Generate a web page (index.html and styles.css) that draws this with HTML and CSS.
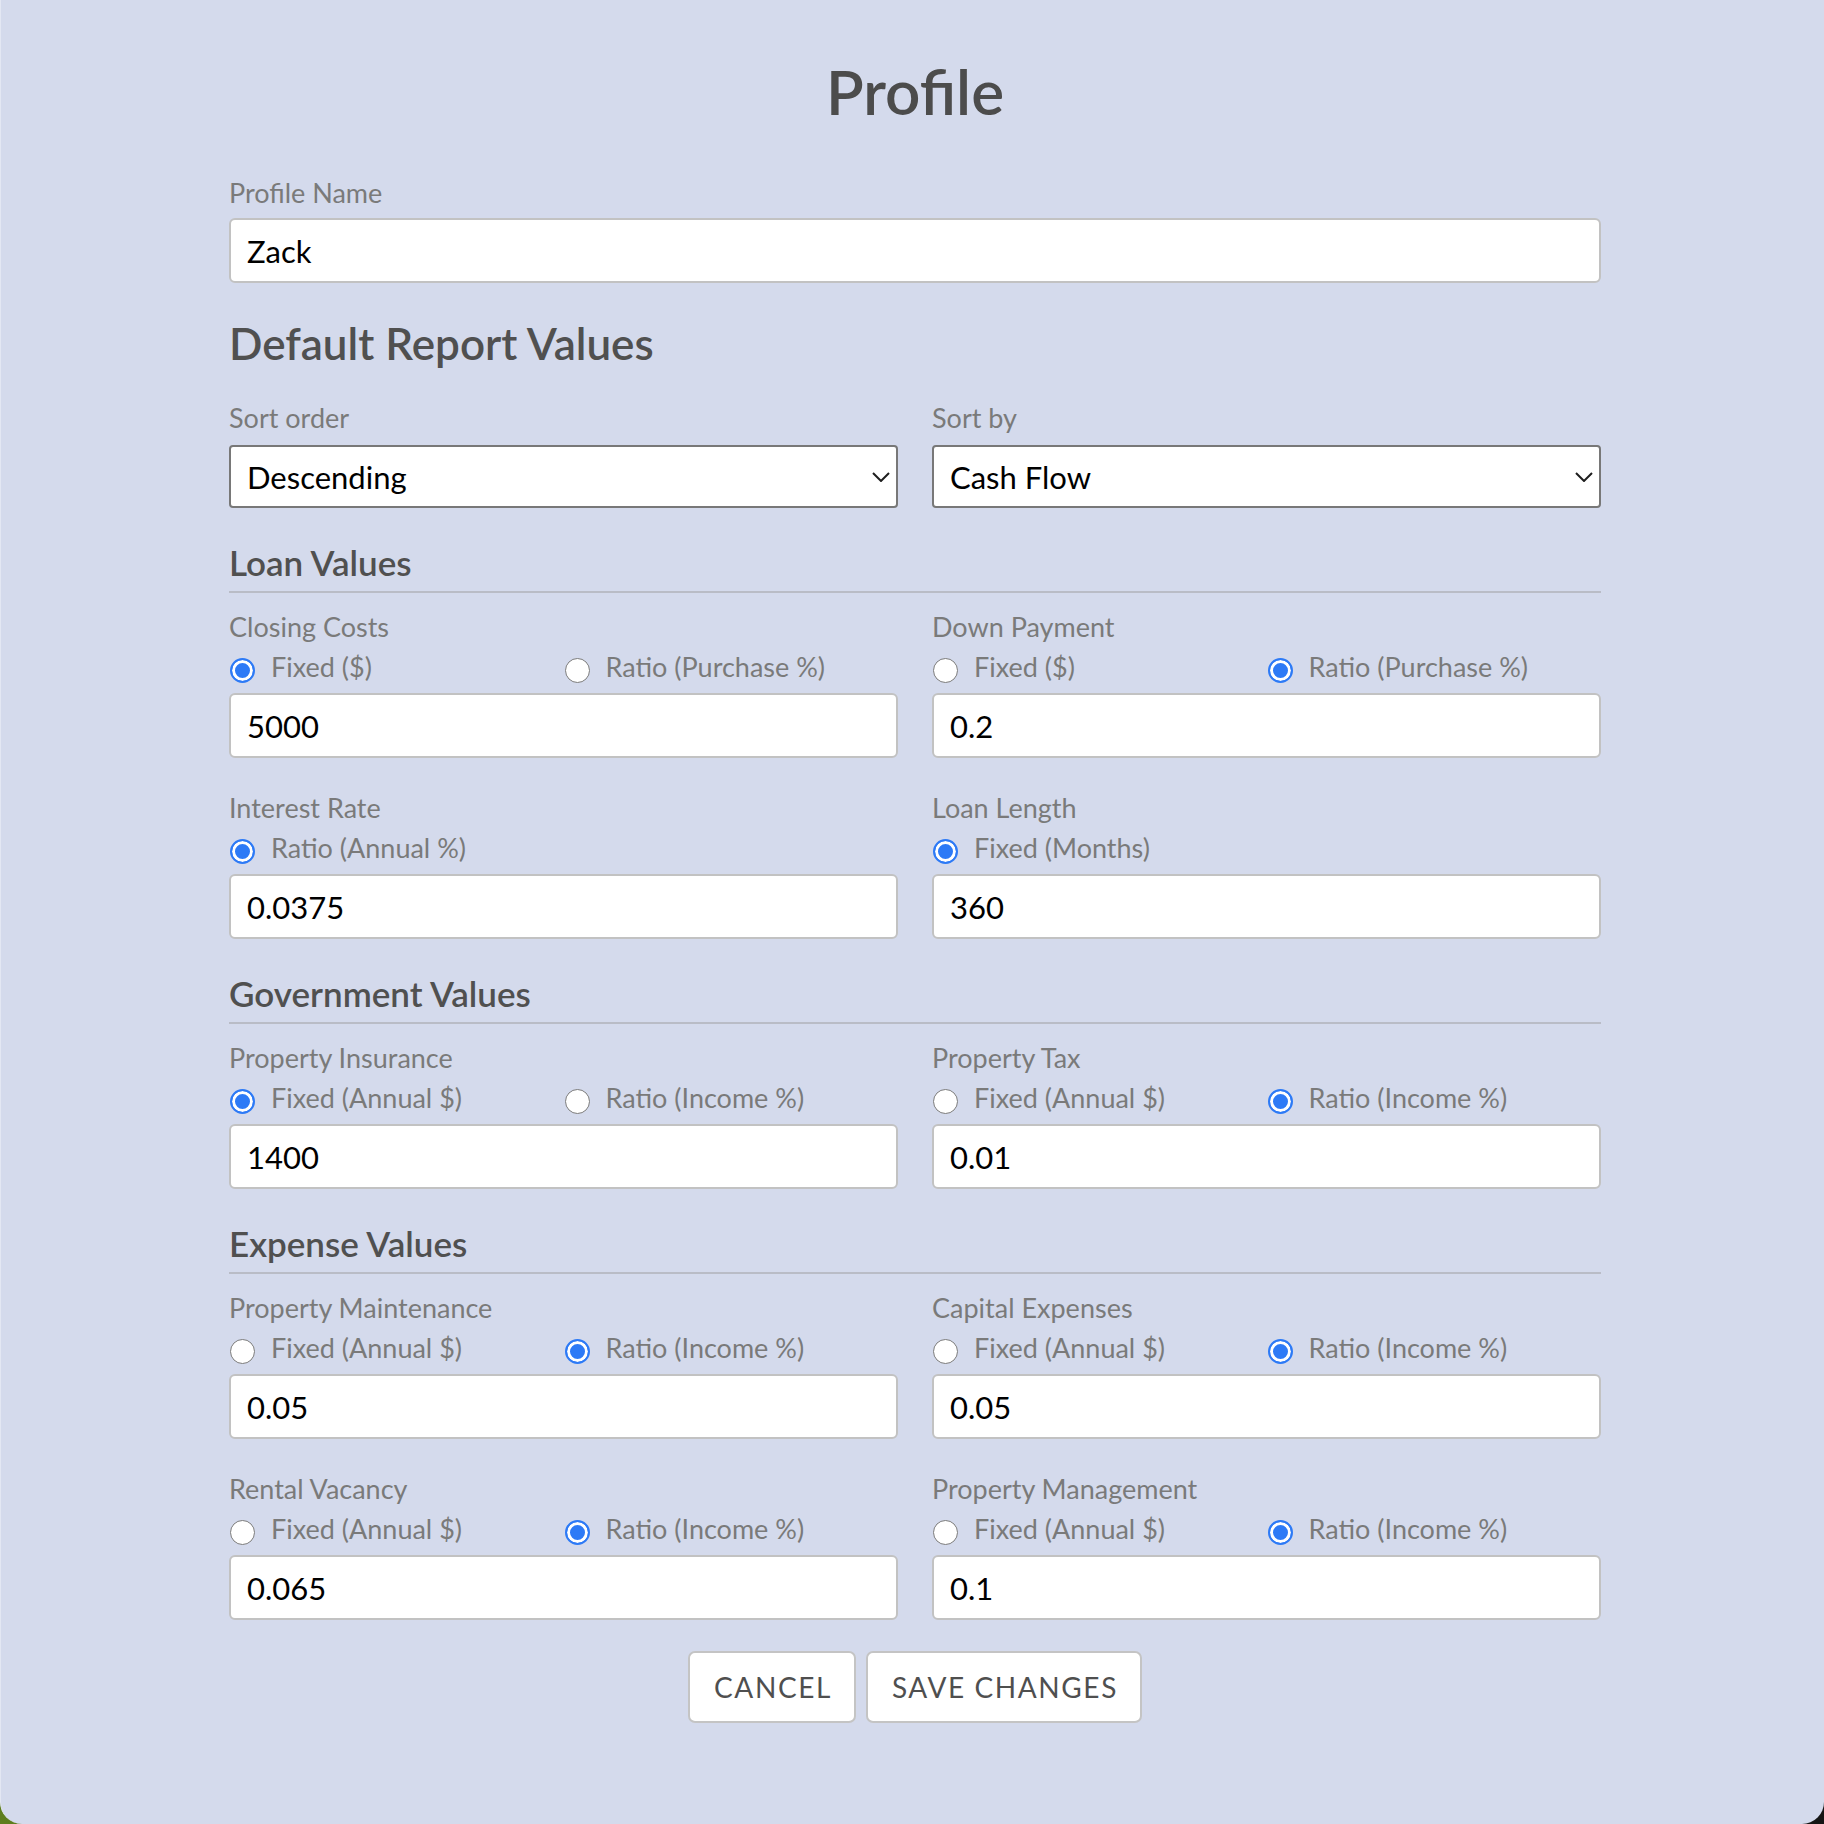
FILE: index.html
```html
<!DOCTYPE html>
<html lang="en">
<head>
<meta charset="utf-8">
<title>Profile</title>
<link rel="stylesheet" href="styles.css">
</head>
<body>
<div class="window">
  <form class="profile">
    <h1 class="title">Profile</h1>

    <div class="field field-name">
      <label class="label" for="pname">Profile Name</label>
      <input class="text-input" id="pname" type="text" value="Zack">
    </div>

    <h2 class="report-title">Default Report Values</h2>

    <div class="grid sort-grid">
      <div class="field">
        <span class="label">Sort order</span>
        <div class="select" role="combobox">
          <span class="select-value">Descending</span>
          <svg class="chevron" width="18" height="10" viewBox="0 0 18 10"><path d="M1 1 L9 9 L17 1" fill="none" stroke="#1e1e1e" stroke-width="2"/></svg>
        </div>
      </div>
      <div class="field">
        <span class="label">Sort by</span>
        <div class="select" role="combobox">
          <span class="select-value">Cash Flow</span>
          <svg class="chevron" width="18" height="10" viewBox="0 0 18 10"><path d="M1 1 L9 9 L17 1" fill="none" stroke="#1e1e1e" stroke-width="2"/></svg>
        </div>
      </div>
    </div>

    <section class="group">
      <h3 class="group-title">Loan Values</h3>
      <div class="grid">
        <div class="field">
          <span class="label">Closing Costs</span>
          <div class="radios">
            <label class="option"><input class="radio" type="radio" name="cc" checked><span>Fixed ($)</span></label>
            <label class="option"><input class="radio" type="radio" name="cc"><span>Ratio (Purchase %)</span></label>
          </div>
          <input class="text-input" type="text" value="5000">
        </div>
        <div class="field">
          <span class="label">Down Payment</span>
          <div class="radios">
            <label class="option"><input class="radio" type="radio" name="dp"><span>Fixed ($)</span></label>
            <label class="option"><input class="radio" type="radio" name="dp" checked><span>Ratio (Purchase %)</span></label>
          </div>
          <input class="text-input" type="text" value="0.2">
        </div>
        <div class="field">
          <span class="label">Interest Rate</span>
          <div class="radios">
            <label class="option"><input class="radio" type="radio" name="ir" checked><span>Ratio (Annual %)</span></label>
          </div>
          <input class="text-input" type="text" value="0.0375">
        </div>
        <div class="field">
          <span class="label">Loan Length</span>
          <div class="radios">
            <label class="option"><input class="radio" type="radio" name="ll" checked><span>Fixed (Months)</span></label>
          </div>
          <input class="text-input" type="text" value="360">
        </div>
      </div>
    </section>

    <section class="group">
      <h3 class="group-title">Government Values</h3>
      <div class="grid">
        <div class="field">
          <span class="label">Property Insurance</span>
          <div class="radios">
            <label class="option"><input class="radio" type="radio" name="pi" checked><span>Fixed (Annual $)</span></label>
            <label class="option"><input class="radio" type="radio" name="pi"><span>Ratio (Income %)</span></label>
          </div>
          <input class="text-input" type="text" value="1400">
        </div>
        <div class="field">
          <span class="label">Property Tax</span>
          <div class="radios">
            <label class="option"><input class="radio" type="radio" name="pt"><span>Fixed (Annual $)</span></label>
            <label class="option"><input class="radio" type="radio" name="pt" checked><span>Ratio (Income %)</span></label>
          </div>
          <input class="text-input" type="text" value="0.01">
        </div>
      </div>
    </section>

    <section class="group">
      <h3 class="group-title">Expense Values</h3>
      <div class="grid">
        <div class="field">
          <span class="label">Property Maintenance</span>
          <div class="radios">
            <label class="option"><input class="radio" type="radio" name="pm"><span>Fixed (Annual $)</span></label>
            <label class="option"><input class="radio" type="radio" name="pm" checked><span>Ratio (Income %)</span></label>
          </div>
          <input class="text-input" type="text" value="0.05">
        </div>
        <div class="field">
          <span class="label">Capital Expenses</span>
          <div class="radios">
            <label class="option"><input class="radio" type="radio" name="ce"><span>Fixed (Annual $)</span></label>
            <label class="option"><input class="radio" type="radio" name="ce" checked><span>Ratio (Income %)</span></label>
          </div>
          <input class="text-input" type="text" value="0.05">
        </div>
        <div class="field">
          <span class="label">Rental Vacancy</span>
          <div class="radios">
            <label class="option"><input class="radio" type="radio" name="rv"><span>Fixed (Annual $)</span></label>
            <label class="option"><input class="radio" type="radio" name="rv" checked><span>Ratio (Income %)</span></label>
          </div>
          <input class="text-input" type="text" value="0.065">
        </div>
        <div class="field">
          <span class="label">Property Management</span>
          <div class="radios">
            <label class="option"><input class="radio" type="radio" name="pmg"><span>Fixed (Annual $)</span></label>
            <label class="option"><input class="radio" type="radio" name="pmg" checked><span>Ratio (Income %)</span></label>
          </div>
          <input class="text-input" type="text" value="0.1">
        </div>
      </div>
    </section>

    <div class="actions">
      <button class="btn" type="button">CANCEL</button>
      <button class="btn" type="button">SAVE CHANGES</button>
    </div>
  </form>
</div>
</body>
</html>
```

FILE: styles.css
```css
html {
  background: linear-gradient(90deg, #5e7e1e 0%, #3b4a18 45%, #151515 100%);
}
body {
  margin: 0;
  font-family: "Lato", "Liberation Sans", sans-serif;
}
.window {
  box-sizing: border-box;
  min-height: 1824px;
  background: #d4daec;
  border-left: 1px solid #e3e7f3;
  border-radius: 0 0 22px 22px;
  padding-top: 51px;
}
.profile {
  width: 1372px;
  margin-left: 228px;
  display: flex;
  flex-direction: column;
}
.title {
  margin: 0;
  font-size: 62px;
  line-height: 80px;
  font-weight: 600;
  color: #4c4c4c;
  text-align: center;
}
.label {
  display: block;
  font-size: 27px;
  line-height: 30px;
  color: #7a7a7a;
}
.field {
  display: flex;
  flex-direction: column;
}
.field-name {
  margin-top: 47px;
}
.text-input {
  box-sizing: border-box;
  width: 100%;
  height: 65px;
  margin: 10px 0 0 0;
  padding: 0 16px;
  border: 2px solid #c2c2c2;
  border-radius: 6px;
  background: #ffffff;
  font-family: "Lato", "Liberation Sans", sans-serif;
  font-size: 31px;
  color: #000;
  outline: none;
}
.report-title {
  margin: 37px 0 0 0;
  font-size: 44px;
  line-height: 46px;
  font-weight: 600;
  color: #505050;
}
.grid {
  display: grid;
  grid-template-columns: 1fr 1fr;
  column-gap: 34px;
  row-gap: 35px;
}
.sort-grid {
  margin-top: 37px;
}
.select {
  box-sizing: border-box;
  height: 63px;
  margin-top: 12px;
  padding: 0 6px 0 16px;
  border: 2px solid #787878;
  border-radius: 4px;
  background: #fff;
  display: flex;
  align-items: center;
  justify-content: space-between;
}
.select-value {
  font-size: 31px;
  color: #000;
}
.chevron {
  display: block;
}
.group {
  margin-top: 36px;
}
.group-title {
  margin: 0;
  font-size: 35px;
  line-height: 36px;
  font-weight: 600;
  color: #505050;
  padding-bottom: 11px;
  border-bottom: 2px solid #b9bcc6;
}
.group .grid {
  margin-top: 19px;
}
.radios {
  display: grid;
  grid-template-columns: 1fr 1fr;
  margin-top: 10px;
}
.option {
  display: flex;
  align-items: flex-start;
  gap: 16px;
  font-size: 27px;
  line-height: 30px;
  color: #7a7a7a;
}
.radio {
  -webkit-appearance: none;
  appearance: none;
  box-sizing: border-box;
  flex: none;
  width: 25px;
  height: 25px;
  margin: 6px 0 0 1px;
  border: 1.5px solid #7b7b7b;
  border-radius: 50%;
  background: #fff;
}
.radio:checked {
  border: 2px solid #2d7af6;
  background: #2d7af6;
  box-shadow: inset 0 0 0 3px #fff;
}
.actions {
  margin-top: 31px;
  display: flex;
  justify-content: center;
  gap: 10px;
}
.btn {
  box-sizing: border-box;
  height: 72px;
  padding: 0 22px 0 24px;
  border: 2px solid #c4c4c4;
  border-radius: 7px;
  background: #fff;
  font-family: "Lato", "Liberation Sans", sans-serif;
  font-size: 28px;
  letter-spacing: 1.6px;
  color: #4f4f4f;
}
```
